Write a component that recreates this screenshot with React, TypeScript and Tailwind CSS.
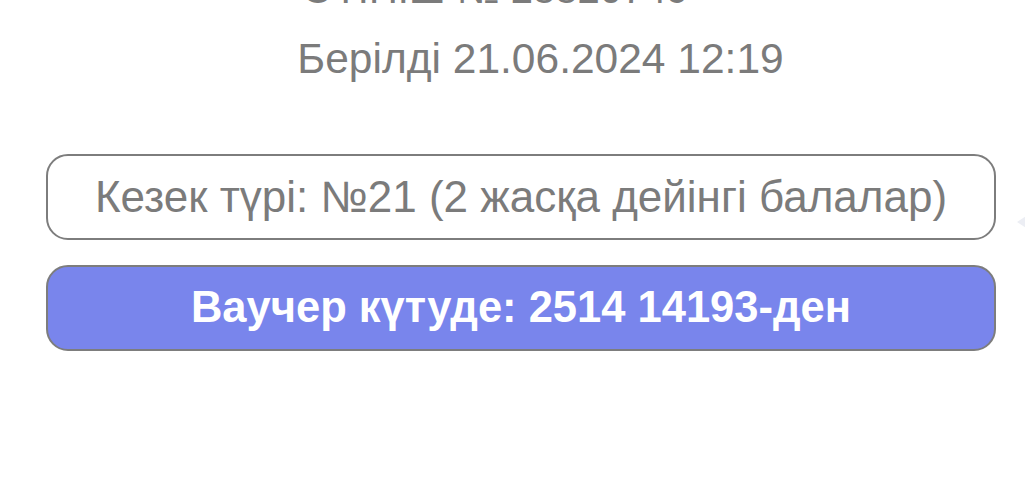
import React from "react";

const App: React.FC = () => {
    return (
        <div className="relative w-[1025px] h-[485px] overflow-hidden bg-white font-['Liberation_Sans',Arial,sans-serif]">
            <div className="flex flex-col items-center">
                {/* number line, scrolled mostly out of view */}
                <p className="mt-[-33px] pr-[34px] text-[40px] leading-[44px] text-[#7b7b7b]">ӨТІНІШ № 28820749</p>

                <p className="mt-[24px] pl-[56px] text-[42.5px] leading-[48px] text-[#7b7b7b]">Берілді 21.06.2024 12:19</p>
            </div>

            <div className="flex flex-col gap-[25px] px-[46px] mt-[71px] w-[1042px]">
                <div className="h-[86px] flex items-center justify-center rounded-[22px] border-[2.5px] border-[#7d7d7d] bg-white">
                    <span className="text-[44px] text-[#7b7b7b]">Кезек түрі: №21 (2 жасқа дейінгі балалар)</span>
                </div>
                <div className="h-[86px] flex items-center justify-center rounded-[22px] border-[2.5px] border-[#7d7d7d] bg-[#7985ec]">
                    <span className="text-[43.5px] font-bold text-white">Ваучер күтуде: 2514 14193-ден</span>
                </div>
            </div>

            {/* faint pager arrow at the right edge */}
            <div className="absolute right-[-4px] top-[214px] w-0 h-0 border-y-[8px] border-y-transparent border-r-[12px] border-r-[#eceef4]" />
        </div>
    );
};

export default App;
